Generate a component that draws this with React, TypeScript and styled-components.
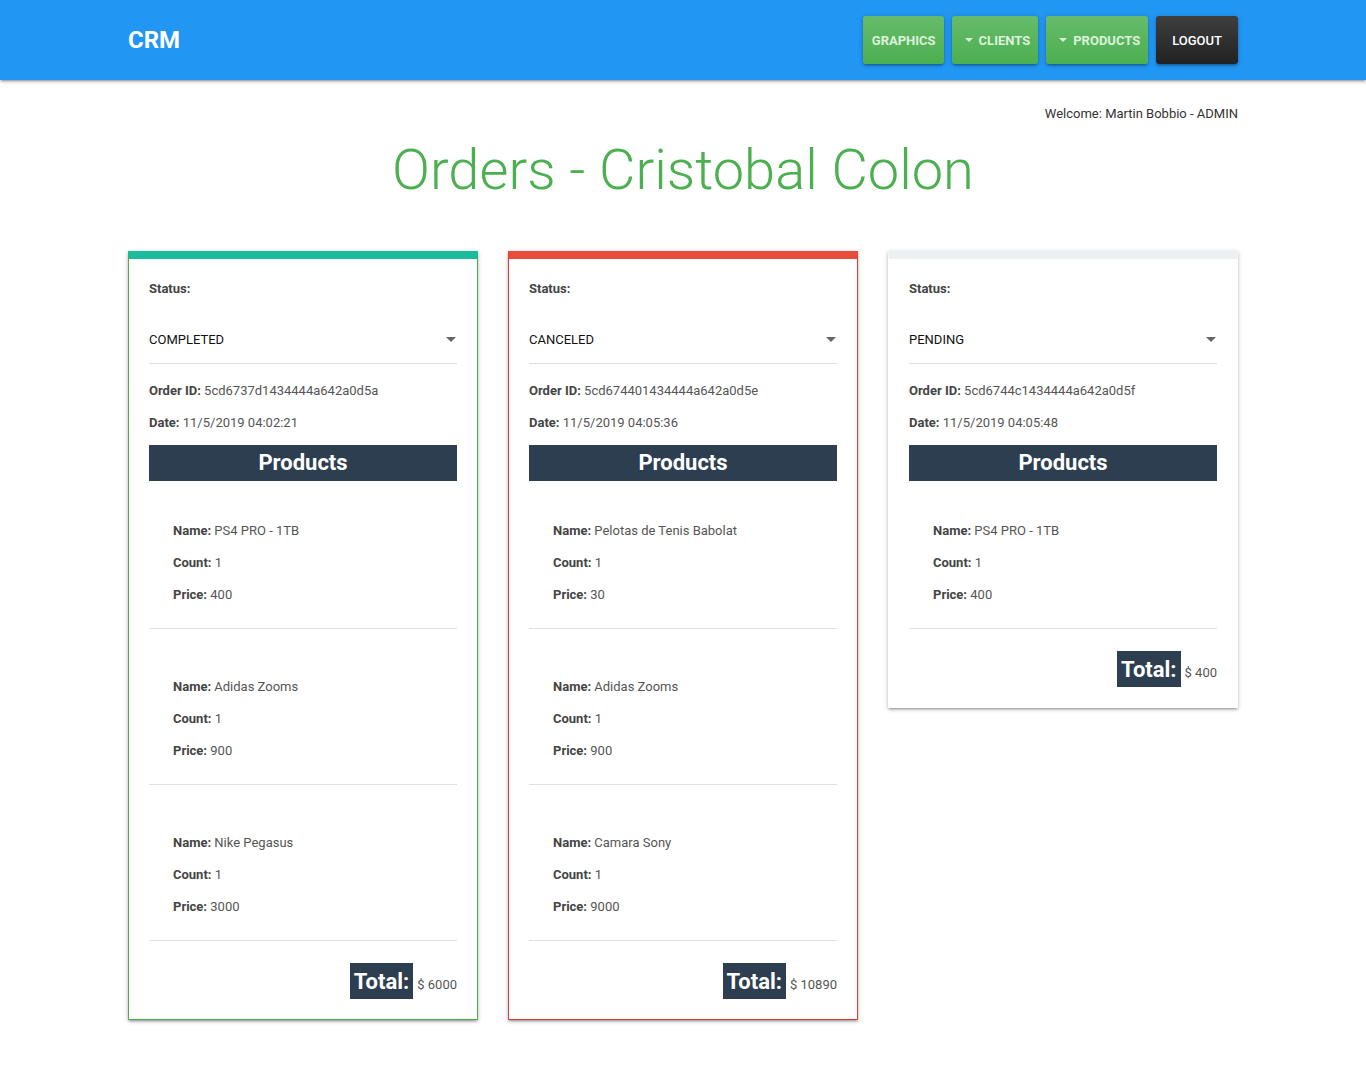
import React from "react";
import styled, { createGlobalStyle } from "styled-components";

const Global = createGlobalStyle`
  * { box-sizing: border-box; }
  body {
    margin: 0;
    font-family: Roboto, "Liberation Sans", Arial, sans-serif;
    background: #fff;
    color: #333;
  }
`;

const Nav = styled.nav`
  height: 80px;
  background: #2196f3;
  box-shadow: 0 2px 2px 0 rgba(0,0,0,.14), 0 3px 1px -2px rgba(0,0,0,.12), 0 1px 5px 0 rgba(0,0,0,.2);
`;

const Container = styled.div`
  width: 1110px;
  margin: 0 auto;
`;

const NavInner = styled(Container)`
  height: 80px;
  display: flex;
  align-items: center;
  justify-content: space-between;
`;

const Brand = styled.div`
  color: #fff;
  font-size: 24px;
  font-weight: 700;
`;

const NavButtons = styled.div`
  display: flex;
  gap: 8px;
`;

const NavButton = styled.button<{ $dark?: boolean; $caret?: boolean }>`
  height: 48px;
  border: none;
  border-radius: 3px;
  padding: 0 ${(p) => (p.$dark ? "16px" : "8px")} 0
    ${(p) => (p.$dark ? "16px" : p.$caret ? "13px" : "9px")};
  display: flex;
  align-items: center;
  gap: 6px;
  font-family: inherit;
  font-size: 13px;
  font-weight: ${(p) => (p.$dark ? 500 : 700)};
  text-transform: uppercase;
  color: ${(p) => (p.$dark ? "#fff" : "#dcf1dc")};
  background: ${(p) =>
    p.$dark
      ? "linear-gradient(#3e3e3e, #222)"
      : "linear-gradient(#66bb6a, #4caf50)"};
  box-shadow: 0 2px 2px 0 rgba(0,0,0,.14), 0 3px 1px -2px rgba(0,0,0,.12), 0 1px 5px 0 rgba(0,0,0,.2);
`;

const Caret = styled.span`
  width: 0;
  height: 0;
  border-left: 4px solid transparent;
  border-right: 4px solid transparent;
  border-top: 4px solid currentColor;
`;

const Welcome = styled.p`
  margin: 26px 0 0;
  text-align: right;
  font-size: 13px;
  line-height: 16px;
  color: #333;
`;

const Title = styled.h1`
  margin: 13px 0 0;
  text-align: center;
  font-size: 56px;
  line-height: 70px;
  font-weight: 300;
  color: #4caf50;
`;

const Grid = styled.div`
  margin-top: 46px;
  display: grid;
  grid-template-columns: repeat(3, 350px);
  gap: 30px;
  align-items: start;
  padding-bottom: 60px;
`;

const Card = styled.div<{ $top: string; $border: string }>`
  background: #fff;
  border: 1px solid ${(p) => p.$border};
  border-top: 8px solid ${(p) => p.$top};
  padding: 20px;
  box-shadow: 0 2px 2px 0 rgba(0,0,0,.14), 0 3px 1px -2px rgba(0,0,0,.12), 0 1px 5px 0 rgba(0,0,0,.2);
`;

const Line = styled.p<{ $mt?: number }>`
  margin: ${(p) => p.$mt ?? 0}px 0 0;
  font-size: 13px;
  line-height: 20px;
  color: #555;
  b { color: #444; font-weight: 700; }
`;

const Select = styled.div`
  margin-top: 18px;
  height: 47px;
  padding-bottom: 2px;
  border-bottom: 1px solid #ddd;
  display: flex;
  align-items: center;
  justify-content: space-between;
  font-size: 13px;
  color: #111;
`;

const SelectArrow = styled.span`
  width: 0;
  height: 0;
  border-left: 5px solid transparent;
  border-right: 5px solid transparent;
  border-top: 5px solid #666;
  margin-right: 1px;
`;

const ProductsHeader = styled.h2`
  margin: 12px 0 0;
  height: 36px;
  background: #2c3e50;
  color: #fff;
  font-size: 22px;
  line-height: 36px;
  font-weight: 700;
  text-align: center;
`;

const Item = styled.div`
  padding: 40px 24px 23px;
  border-bottom: 1px solid #e0e0e0;
  & + & { margin-top: 8px; }
  p + p { margin-top: 12px; }
`;

const TotalRow = styled.div`
  margin-top: 22px;
  display: flex;
  justify-content: flex-end;
  align-items: flex-end;
  gap: 4px;
`;

const TotalLabel = styled.span`
  background: #2c3e50;
  color: #fff;
  font-size: 22px;
  font-weight: 700;
  height: 36px;
  line-height: 37px;
  padding: 0 4px;
`;

const TotalValue = styled.span`
  font-size: 13px;
  color: #555;
  line-height: 20px;
  padding-bottom: 4px;
`;

type Product = { name: string; count: number; price: number };
type Order = {
  status: string;
  id: string;
  date: string;
  top: string;
  border: string;
  products: Product[];
  total: number;
};

const orders: Order[] = [
  {
    status: "COMPLETED",
    id: "5cd6737d1434444a642a0d5a",
    date: "11/5/2019 04:02:21",
    top: "#1abc9c",
    border: "#4caf50",
    products: [
      { name: "PS4 PRO - 1TB", count: 1, price: 400 },
      { name: "Adidas Zooms", count: 1, price: 900 },
      { name: "Nike Pegasus", count: 1, price: 3000 },
    ],
    total: 6000,
  },
  {
    status: "CANCELED",
    id: "5cd674401434444a642a0d5e",
    date: "11/5/2019 04:05:36",
    top: "#e74c3c",
    border: "#e53935",
    products: [
      { name: "Pelotas de Tenis Babolat", count: 1, price: 30 },
      { name: "Adidas Zooms", count: 1, price: 900 },
      { name: "Camara Sony", count: 1, price: 9000 },
    ],
    total: 10890,
  },
  {
    status: "PENDING",
    id: "5cd6744c1434444a642a0d5f",
    date: "11/5/2019 04:05:48",
    top: "#ecf0f1",
    border: "#fff",
    products: [{ name: "PS4 PRO - 1TB", count: 1, price: 400 }],
    total: 400,
  },
];

export default function App() {
  return (
    <>
      <Global />
      <Nav>
        <NavInner>
          <Brand>CRM</Brand>
          <NavButtons>
            <NavButton>Graphics</NavButton>
            <NavButton $caret>
              <Caret />
              Clients
            </NavButton>
            <NavButton $caret>
              <Caret />
              Products
            </NavButton>
            <NavButton $dark>Logout</NavButton>
          </NavButtons>
        </NavInner>
      </Nav>
      <Container>
        <Welcome>Welcome: Martin Bobbio - ADMIN</Welcome>
        <Title>Orders - Cristobal Colon</Title>
        <Grid>
          {orders.map((o) => (
            <Card key={o.id} $top={o.top} $border={o.border}>
              <Line>
                <b>Status:</b>
              </Line>
              <Select>
                <span>{o.status}</span>
                <SelectArrow />
              </Select>
              <Line $mt={17}>
                <b>Order ID:</b> {o.id}
              </Line>
              <Line $mt={12}>
                <b>Date:</b> {o.date}
              </Line>
              <ProductsHeader>Products</ProductsHeader>
              {o.products.map((p, i) => (
                <Item key={i}>
                  <Line>
                    <b>Name:</b> {p.name}
                  </Line>
                  <Line>
                    <b>Count:</b> {p.count}
                  </Line>
                  <Line>
                    <b>Price:</b> {p.price}
                  </Line>
                </Item>
              ))}
              <TotalRow>
                <TotalLabel>Total:</TotalLabel>
                <TotalValue>$ {o.total}</TotalValue>
              </TotalRow>
            </Card>
          ))}
        </Grid>
      </Container>
    </>
  );
}
